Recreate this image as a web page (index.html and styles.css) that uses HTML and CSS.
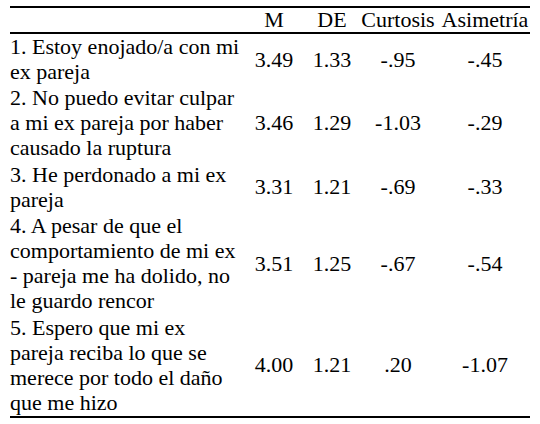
FILE: index.html
```html
<!DOCTYPE html>
<html lang="es">
<head>
    <meta charset="UTF-8">
    <meta name="viewport" content="width=device-width, initial-scale=1.0">
    <title>Estadísticos descriptivos</title>
    <link rel="stylesheet" href="styles.css">
</head>
<body>

    <table class="stats-table">
        <colgroup>
            <col class="col-item">
            <col class="col-m">
            <col class="col-de">
            <col class="col-curt">
            <col class="col-asim">
        </colgroup>
        <thead>
            <tr>
                <th></th>
                <th>M</th>
                <th>DE</th>
                <th>Curtosis</th>
                <th class="asim">Asimetría</th>
            </tr>
        </thead>
        <tbody>
            <tr>
                <td class="item">1. Estoy enojado/a con mi ex pareja</td>
                <td>3.49</td>
                <td>1.33</td>
                <td>-.95</td>
                <td class="asim">-.45</td>
            </tr>
            <tr>
                <td class="item">2. No puedo evitar culpar a mi ex pareja por haber causado la ruptura</td>
                <td>3.46</td>
                <td>1.29</td>
                <td>-1.03</td>
                <td class="asim">-.29</td>
            </tr>
            <tr>
                <td class="item">3. He perdonado a mi ex pareja</td>
                <td>3.31</td>
                <td>1.21</td>
                <td>-.69</td>
                <td class="asim">-.33</td>
            </tr>
            <tr>
                <td class="item">4. A pesar de que el comportamiento de mi ex - pareja me ha dolido, no le guardo rencor</td>
                <td>3.51</td>
                <td>1.25</td>
                <td>-.67</td>
                <td class="asim">-.54</td>
            </tr>
            <tr>
                <td class="item">5. Espero que mi ex pareja reciba lo que se merece por todo el daño que me hizo</td>
                <td>4.00</td>
                <td>1.21</td>
                <td>.20</td>
                <td class="asim">-1.07</td>
            </tr>
        </tbody>
    </table>

</body>
</html>
```

FILE: styles.css
```css
body {
    margin: 0;
    padding: 6px 0 0 10px;
    background-color: #fff;
    color: #000;
    font-family: "Liberation Serif", "Times New Roman", serif;
    font-size: 22px;
}

.stats-table {
    width: 520px;
    table-layout: fixed;
    border-collapse: collapse;
    border-top: 2px solid #000;
    border-bottom: 2px solid #000;
}

.col-item { width: 232px; }
.col-m { width: 64px; }
.col-de { width: 52px; }
.col-curt { width: 80px; }
.col-asim { width: 92px; }

.stats-table th {
    font-weight: normal;
    line-height: 24px;
    padding: 0;
    text-align: center;
    white-space: nowrap;
    border-bottom: 2px solid #000;
}

.stats-table td {
    line-height: 25px;
    padding: 0 0 1.4px 0;
    text-align: center;
    vertical-align: middle;
}

.stats-table td.item {
    text-align: left;
}

.stats-table .asim {
    padding-left: 2px;
}
```
